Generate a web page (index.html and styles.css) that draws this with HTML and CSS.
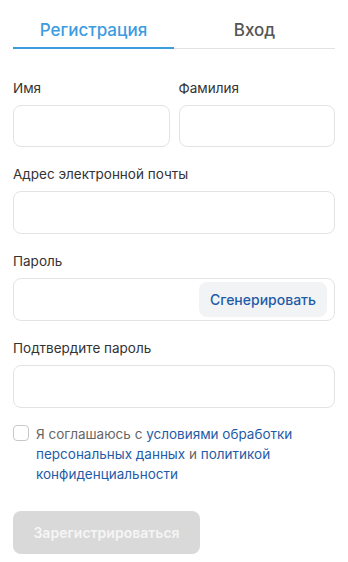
FILE: index.html
```html
<!DOCTYPE html>
<html lang="ru">
<head>
    <meta charset="UTF-8">
    <meta name="viewport" content="width=device-width, initial-scale=1.0">
    <title>Регистрация</title>
    <link rel="stylesheet" href="styles.css">
</head>
<body>
    <div class="auth">
        <div class="tabs">
            <div class="tab active">Регистрация</div>
            <div class="tab">Вход</div>
        </div>

        <form class="form">
            <div class="row">
                <div class="field">
                    <label for="name">Имя</label>
                    <input class="input" id="name" type="text">
                </div>
                <div class="field">
                    <label for="surname">Фамилия</label>
                    <input class="input" id="surname" type="text">
                </div>
            </div>

            <div class="field">
                <label for="email">Адрес электронной почты</label>
                <input class="input" id="email" type="email">
            </div>

            <div class="field">
                <label for="password">Пароль</label>
                <div class="input with-btn">
                    <input id="password" type="password">
                    <button type="button" class="gen-btn">Сгенерировать</button>
                </div>
            </div>

            <div class="field field-last">
                <label for="password2">Подтвердите пароль</label>
                <input class="input" id="password2" type="password">
            </div>

            <label class="agree">
                <input type="checkbox">
                <span>Я соглашаюсь с <a href="#">условиями обработки персональных данных</a> и <a href="#">политикой конфиденциальности</a></span>
            </label>

            <button type="submit" class="submit" disabled>Зарегистрироваться</button>
        </form>
    </div>
</body>
</html>
```

FILE: styles.css
```css
body {
    margin: 0;
    font-family: Inter, "Noto Sans", sans-serif;
    color: #333;
    background: #fff;
}
.auth {
    padding: 0 13px;
}
.tabs {
    display: flex;
    border-bottom: 1px solid #e2e2e2;
}
.tab {
    flex: 1;
    text-align: center;
    font-size: 17px;
    font-weight: 500;
    line-height: 20px;
    padding: 20px 0 7px;
    color: #555;
    margin-bottom: -1px;
    border-bottom: 2px solid transparent;
}
.tab.active {
    color: #3d9be0;
    border-bottom-color: #3d9be0;
}
.form {
    padding-top: 30px;
}
.row {
    display: flex;
    gap: 9px;
}
.row .field {
    flex: 1;
}
.row .input {
    height: 42px;
}
.field {
    margin-bottom: 18px;
}
.field-last {
    margin-bottom: 16px;
}
.field label {
    display: block;
    font-size: 13.5px;
    line-height: 18px;
    margin-bottom: 8px;
    color: #333;
}
.input {
    display: block;
    box-sizing: border-box;
    width: 100%;
    height: 43px;
    border: 1px solid #e3e3e3;
    border-radius: 8px;
    background: #fff;
    font: inherit;
    padding: 0 12px;
    outline: none;
}
.with-btn {
    display: flex;
    align-items: center;
    padding: 3px 7px 3px 12px;
}
.with-btn input {
    flex: 1;
    min-width: 0;
    border: none;
    outline: none;
    font: inherit;
    height: 100%;
    padding: 0;
}
.gen-btn {
    height: 35px;
    padding: 0 11px;
    border: none;
    border-radius: 8px;
    background: #f2f3f5;
    color: #1f5ca8;
    font-family: inherit;
    font-size: 14px;
    font-weight: 500;
}
.agree {
    display: flex;
    gap: 7px;
    align-items: flex-start;
    font-size: 13.5px;
    line-height: 20px;
    color: #666;
}
.agree input {
    appearance: none;
    flex: none;
    width: 16px;
    height: 16px;
    margin: 1px 0 0;
    border: 1px solid #c8c8c8;
    border-radius: 4px;
    background: #fff;
}
.agree a {
    color: #1f5ca8;
    text-decoration: none;
}
.submit {
    display: block;
    margin-top: 27px;
    width: 187px;
    height: 43px;
    border: none;
    border-radius: 8px;
    background: #d9d9d9;
    color: #f5f5f5;
    font-family: inherit;
    font-size: 14px;
    font-weight: 600;
}
```
